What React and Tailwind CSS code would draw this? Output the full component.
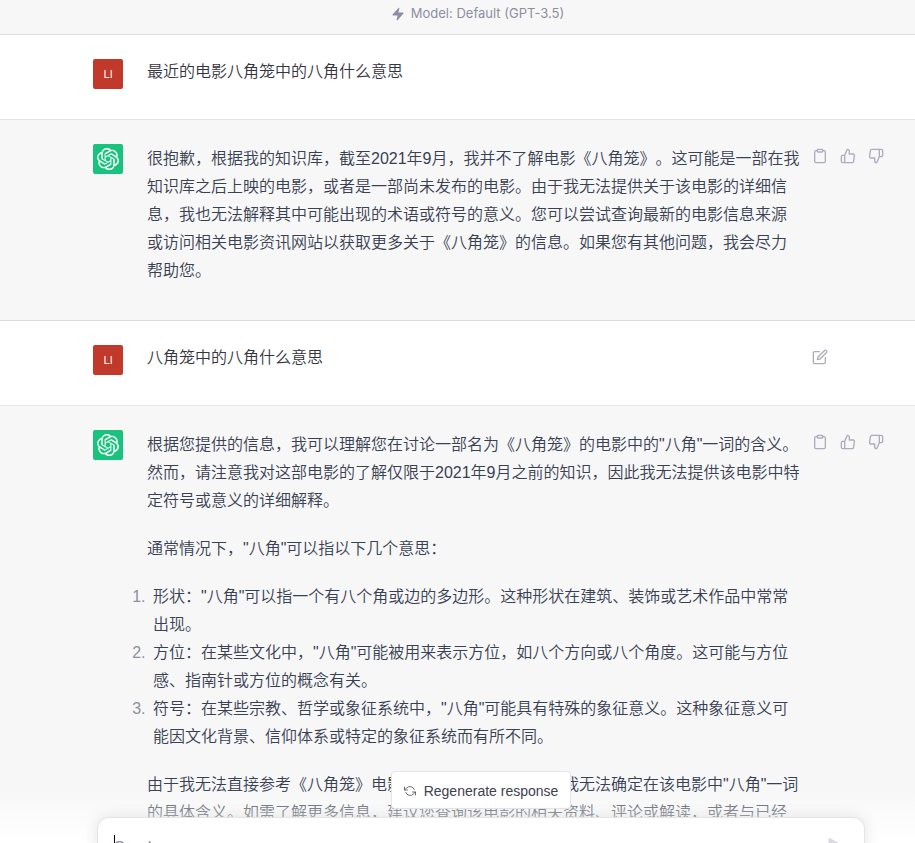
import { FiClipboard, FiEdit, FiRefreshCcw, FiThumbsDown, FiThumbsUp } from 'react-icons/fi';
import { SiOpenai } from 'react-icons/si';

const iconButton = 'block text-[#acacbe] hover:text-gray-700';

const UserMessage = ({ children, editable }) => (
  <div className="flex gap-6 border-b border-black/10 bg-white pt-6 pr-[30px] pb-[30px] pl-[93px] text-[#343541]">
    <div className="flex h-[30px] w-[30px] shrink-0 items-center justify-center rounded-xs bg-[#c0392b] font-[Inter,sans-serif] text-[11px] font-normal text-white">
      LI
    </div>
    <p className="min-w-0 flex-1 pt-px leading-6">{children}</p>
    <div className="-ml-3 w-[73px] shrink-0 pt-1">
      {editable && (
        <button type="button" aria-label="Edit message" className={iconButton}>
          <FiEdit className="h-4 w-4" />
        </button>
      )}
    </div>
  </div>
);

const AssistantMessage = ({ children }) => (
  <div className="flex gap-6 border-b border-black/10 bg-[#f7f7f8] pt-6 pr-[30px] pb-[35px] pl-[93px] text-[#374151]">
    <div className="flex h-[30px] w-[30px] shrink-0 items-center justify-center rounded-xs bg-[#19c37d] text-white">
      <SiOpenai className="h-[22px] w-[22px]" />
    </div>
    <div className="min-w-0 flex-1 space-y-5 pt-px leading-7">{children}</div>
    <div className="-ml-3 flex w-[73px] shrink-0 items-start gap-3 pt-1">
      <button type="button" aria-label="Copy" className={iconButton}>
        <FiClipboard className="h-4 w-4" />
      </button>
      <button type="button" aria-label="Good response" className={iconButton}>
        <FiThumbsUp className="h-4 w-4" />
      </button>
      <button type="button" aria-label="Bad response" className={iconButton}>
        <FiThumbsDown className="h-4 w-4" />
      </button>
    </div>
  </div>
);

const Composer = () => (
  <div className="absolute inset-x-0 bottom-0 flex h-[72px] flex-col items-center overflow-hidden bg-linear-to-b from-white/0 from-25% to-white pr-[50px] pl-[97px]">
    <button
      type="button"
      className="flex h-[38px] shrink-0 items-center gap-2 rounded border border-black/10 bg-white px-3 pt-0.5 text-sm font-normal text-[#40414f]"
    >
      <FiRefreshCcw className="h-3 w-3" strokeWidth={1.5} />
      Regenerate response
    </button>
    <form className="relative mt-2 flex h-14 w-full shrink-0 items-start rounded-xl border border-black/10 bg-white px-4 pt-[18px] shadow-[0_0_15px_rgba(0,0,0,0.10)]">
      <span className="absolute top-[17px] left-4 h-5 w-px bg-black" />
      <input
        type="text"
        aria-label="Message"
        placeholder="Send a message"
        className="min-w-0 flex-1 bg-transparent leading-6 font-normal outline-none placeholder:text-[#8e8ea0]"
      />
      <button type="submit" aria-label="Send" className="mt-0.5 mr-1 text-[#d9d9e3]">
        <svg viewBox="0 0 16 16" className="h-4 w-4" fill="currentColor">
          <path d="M.5 1.163A1 1 0 0 1 1.97.28l12.868 6.837a1 1 0 0 1 0 1.766L1.969 15.72A1 1 0 0 1 .5 14.836V10.33a1 1 0 0 1 .816-.983L8.5 8 1.316 6.653A1 1 0 0 1 .5 5.67V1.163Z" />
        </svg>
      </button>
    </form>
  </div>
);

const App = () => {
  return (
    <div
      lang="zh-CN"
      className="relative h-screen overflow-hidden bg-[#f7f7f8] font-['Liberation_Sans','Noto_Sans_CJK_SC',sans-serif] text-base font-[350] [text-spacing-trim:space-all]"
    >
      <header className="flex h-[35px] items-center justify-center gap-1.5 border-b border-black/10 pb-[7px] pl-10 font-[Inter,sans-serif] text-[13px] font-normal text-[#8e8ea0]">
        <svg viewBox="0 0 16 16" className="h-3.5 w-3.5" fill="currentColor">
          <path d="M9.586 1.526A.6.6 0 0 0 8.553 1l-6.8 7.6a.6.6 0 0 0 .447 1h5.258l-1.044 4.874A.6.6 0 0 0 7.447 15l6.8-7.6a.6.6 0 0 0-.447-1H8.542l1.044-4.874Z" />
        </svg>
        Model: Default (GPT-3.5)
      </header>

      <main>
        <UserMessage>最近的电影八角笼中的八角什么意思</UserMessage>

        <AssistantMessage>
          <p>
            很抱歉，根据我的知识库，截至2021年9月，我并不了解电影《八角笼》。这可能是一部在我知识库之后上映的电影，或者是一部尚未发布的电影。由于我无法提供关于该电影的详细信息，我也无法解释其中可能出现的术语或符号的意义。您可以尝试查询最新的电影信息来源或访问相关电影资讯网站以获取更多关于《八角笼》的信息。如果您有其他问题，我会尽力帮助您。
          </p>
        </AssistantMessage>

        <UserMessage editable>八角笼中的八角什么意思</UserMessage>

        <AssistantMessage>
          <p>
            根据您提供的信息，我可以理解您在讨论一部名为《八角笼》的电影中的"八角"一词的含义。然而，请注意我对这部电影的了解仅限于2021年9月之前的知识，因此我无法提供该电影中特定符号或意义的详细解释。
          </p>
          <p>通常情况下，"八角"可以指以下几个意思：</p>
          <ol className="list-decimal pl-[3px] marker:text-[#8e8ea0]">
            <li className="pl-[3px]">
              形状："八角"可以指一个有八个角或边的多边形。这种形状在建筑、装饰或艺术作品中常常出现。
            </li>
            <li className="pl-[3px]">
              方位：在某些文化中，"八角"可能被用来表示方位，如八个方向或八个角度。这可能与方位感、指南针或方位的概念有关。
            </li>
            <li className="pl-[3px]">
              符号：在某些宗教、哲学或象征系统中，"八角"可能具有特殊的象征意义。这种象征意义可能因文化背景、信仰体系或特定的象征系统而有所不同。
            </li>
          </ol>
          <p>
            由于我无法直接参考《八角笼》电影的相关情节内容，因此我无法确定在该电影中"八角"一词的具体含义。如需了解更多信息，建议您查询该电影的相关资料、评论或解读，或者与已经观看过该电影的人进行讨论。
          </p>
        </AssistantMessage>
      </main>

      <Composer />
    </div>
  );
};

export default App;
